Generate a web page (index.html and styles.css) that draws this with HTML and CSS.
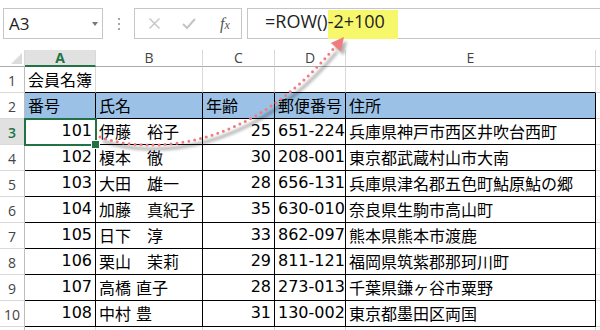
FILE: index.html
```html
<!DOCTYPE html>
<html lang="ja">
<head>
    <meta charset="UTF-8">
    <title>会員名簿 - ROW関数</title>
    <link rel="stylesheet" href="styles.css">
</head>
<body>

    <div class="toolbar">
        <div class="namebox"><span>A3</span><span class="caret"></span></div>
        <div class="grip"><i></i><i></i><i></i></div>
        <div class="btnbox">
            <svg class="btn-x" width="13" height="13" viewBox="0 0 13 13"><path d="M1.5 1.5 L11.5 11.5 M11.5 1.5 L1.5 11.5" stroke="#c4c4c4" stroke-width="1.4" fill="none"/></svg>
            <svg class="btn-ok" width="14" height="13" viewBox="0 0 14 13"><path d="M1 7 L5 11 L13 2" stroke="#c4c4c4" stroke-width="2" fill="none"/></svg>
            <span class="fx"><i>f</i><i class="x">x</i></span>
        </div>
        <div class="formula"><span class="ftext">=ROW()</span><span class="ftext hl">-2+100</span></div>
    </div>

    <div class="sheet">
        <!-- column headers -->
        <div class="c h corner"><span class="tri"></span></div>
        <div class="c h sel">A</div>
        <div class="c h">B</div>
        <div class="c h">C</div>
        <div class="c h">D</div>
        <div class="c h">E</div>
        <div class="c h f"></div>

        <div class="c r">1</div>
        <div class="c t">会員名簿</div>
        <div class="c t"></div>
        <div class="c t"></div>
        <div class="c t"></div>
        <div class="c t"></div>
        <div class="c f"></div>

        <div class="c r">2</div>
        <div class="c d th">番号</div>
        <div class="c d th">氏名</div>
        <div class="c d th">年齢</div>
        <div class="c d th">郵便番号</div>
        <div class="c d th">住所</div>
        <div class="c f"></div>

        <div class="c r sel">3</div>
        <div class="c d n active">101</div>
        <div class="c d">伊藤　裕子</div>
        <div class="c d n">25</div>
        <div class="c d">651-224</div>
        <div class="c d">兵庫県神戸市西区井吹台西町</div>
        <div class="c f"></div>

        <div class="c r">4</div>
        <div class="c d n">102</div>
        <div class="c d">榎本　徹</div>
        <div class="c d n">30</div>
        <div class="c d">208-001</div>
        <div class="c d">東京都武蔵村山市大南</div>
        <div class="c f"></div>

        <div class="c r">5</div>
        <div class="c d n">103</div>
        <div class="c d">大田　雄一</div>
        <div class="c d n">28</div>
        <div class="c d">656-1314</div>
        <div class="c d">兵庫県津名郡五色町鮎原鮎の郷</div>
        <div class="c f"></div>

        <div class="c r">6</div>
        <div class="c d n">104</div>
        <div class="c d">加藤　真紀子</div>
        <div class="c d n">35</div>
        <div class="c d">630-010</div>
        <div class="c d">奈良県生駒市高山町</div>
        <div class="c f"></div>

        <div class="c r">7</div>
        <div class="c d n">105</div>
        <div class="c d">日下　淳</div>
        <div class="c d n">33</div>
        <div class="c d">862-097</div>
        <div class="c d">熊本県熊本市渡鹿</div>
        <div class="c f"></div>

        <div class="c r">8</div>
        <div class="c d n">106</div>
        <div class="c d">栗山　茉莉</div>
        <div class="c d n">29</div>
        <div class="c d">811-121</div>
        <div class="c d">福岡県筑紫郡那珂川町</div>
        <div class="c f"></div>

        <div class="c r">9</div>
        <div class="c d n">107</div>
        <div class="c d">高橋 直子</div>
        <div class="c d n">28</div>
        <div class="c d">273-013</div>
        <div class="c d">千葉県鎌ヶ谷市粟野</div>
        <div class="c f"></div>

        <div class="c r">10</div>
        <div class="c d n">108</div>
        <div class="c d">中村 豊</div>
        <div class="c d n">31</div>
        <div class="c d">130-002</div>
        <div class="c d">東京都墨田区両国</div>
        <div class="c f"></div>

        <div class="c r"></div>
        <div class="c"></div>
        <div class="c"></div>
        <div class="c"></div>
        <div class="c"></div>
        <div class="c"></div>
        <div class="c f"></div>
    </div>

    <!-- annotation arrow drawn over the sheet -->
    <svg class="arrow" width="600" height="330" viewBox="0 0 600 330">
        <defs>
            <filter id="soft" x="-10%" y="-10%" width="120%" height="120%"><feGaussianBlur stdDeviation="1.6"/></filter>
        </defs>
        <g filter="url(#soft)" opacity="0.3" transform="translate(3 4)">
            <path d="M100 137 C150 155 250 150 334 48" fill="none" stroke="#000" stroke-width="3"/>
            <polygon points="344,37 340.8,51.2 330.8,43" fill="#000"/>
        </g>
        <path d="M100 137 C150 155 250 150 334 48" fill="none" stroke="#f07c82" stroke-width="3" stroke-linecap="round" stroke-dasharray="0 6"/>
        <polygon points="344,37 340.8,51.2 330.8,43" fill="#f07c82"/>
    </svg>

</body>
</html>
```

FILE: styles.css
```css
/* Base */
* {
    box-sizing: border-box;
}
body {
    margin: 0;
    width: 600px;
    height: 330px;
    overflow: hidden;
    position: relative;
    background: #ffffff;
    font-family: 'Open Sans', 'Noto Sans', sans-serif;
}

/* Formula bar */
.toolbar {
    display: flex;
    align-items: flex-start;
    height: 50px;
    padding-top: 8px;
}
.namebox {
    margin-left: 3px;
    width: 100px;
    height: 31px;
    border: 1px solid #c6c6c6;
    display: flex;
    align-items: center;
    justify-content: space-between;
    padding: 0 4px 0 5px;
    font-size: 17px;
    color: #222;
}
.caret {
    width: 0;
    height: 0;
    border-left: 3.5px solid transparent;
    border-right: 3.5px solid transparent;
    border-top: 4px solid #777;
}
.grip {
    width: 31px;
    height: 31px;
    display: flex;
    flex-direction: column;
    align-items: center;
    justify-content: center;
    gap: 3px;
}
.grip i {
    width: 2px;
    height: 2px;
    background: #a8a8a8;
}
.btnbox {
    width: 108px;
    height: 31px;
    border: 1px solid #c6c6c6;
    display: flex;
    align-items: center;
    padding-left: 13px;
}
.btn-ok {
    margin-left: 21px;
}
.fx {
    margin-left: 24px;
    font-family: 'Liberation Serif', serif;
    color: #555;
}
.fx i {
    font-size: 16px;
}
.fx .x {
    font-size: 12px;
}
.formula {
    margin-left: 5px;
    flex: 1;
    height: 31px;
    border: 1px solid #c6c6c6;
    border-right: none;
    display: flex;
    align-items: flex-start;
    padding: 1px 0 0 17px;
}
.ftext {
    height: 29px;
    line-height: 23px;
    font-size: 18px;
    color: #222;
}
.hl {
    background: #f7f76c;
    padding-right: 13px;
}

/* Sheet grid */
.sheet {
    display: grid;
    grid-template-columns: 25px 71px 107px 72px 71px 250px 4px;
    grid-template-rows: 17px repeat(11, 26px);
}
.c {
    display: flex;
    align-items: center;
    padding: 0 3px 2px 3px;
    border-right: 1px solid #d9d9d9;
    border-bottom: 1px solid #d9d9d9;
    overflow: hidden;
    white-space: nowrap;
    font-family: 'DejaVu Sans', 'Noto Sans CJK JP', sans-serif;
    font-size: 16px;
    color: #000;
}
.h {
    justify-content: center;
    padding: 0;
    overflow: visible;
    font-family: 'Open Sans', sans-serif;
    font-size: 14px;
    line-height: 1;
    color: #444;
    border-bottom-color: #ababab;
}
.h.sel {
    background: #e1e1e1;
    color: #217346;
    font-weight: bold;
    border-bottom: 2px solid #217346;
}
.corner {
    justify-content: flex-end;
    align-items: flex-end;
    padding: 0 2px 2px 0;
}
.tri {
    width: 0;
    height: 0;
    border-left: 11px solid transparent;
    border-bottom: 11px solid #dcdcdc;
}
.r {
    justify-content: center;
    align-items: flex-end;
    padding: 0 0 2px 0;
    font-family: 'Open Sans', sans-serif;
    font-size: 14px;
    line-height: 1.2;
    color: #444;
    border-right-color: #bdbdbd;
}
.r.sel {
    background: #e1e1e1;
    color: #217346;
    font-weight: 600;
}
.f {
    border-right: none;
}
.t {
    border-bottom-color: #000;
}
.d {
    border-right-color: #000;
    border-bottom-color: #000;
}
.th {
    background: #9bc2e6;
}
.n {
    justify-content: flex-end;
}

/* Active cell */
.active {
    position: relative;
    overflow: visible;
    outline: 2px solid #217346;
    outline-offset: -1px;
}
.active::after {
    content: '';
    position: absolute;
    right: -5px;
    bottom: -5px;
    width: 7px;
    height: 7px;
    background: #217346;
    border: 1px solid #fff;
}

/* Annotation overlay */
.arrow {
    position: absolute;
    left: 0;
    top: 0;
    pointer-events: none;
}
```
